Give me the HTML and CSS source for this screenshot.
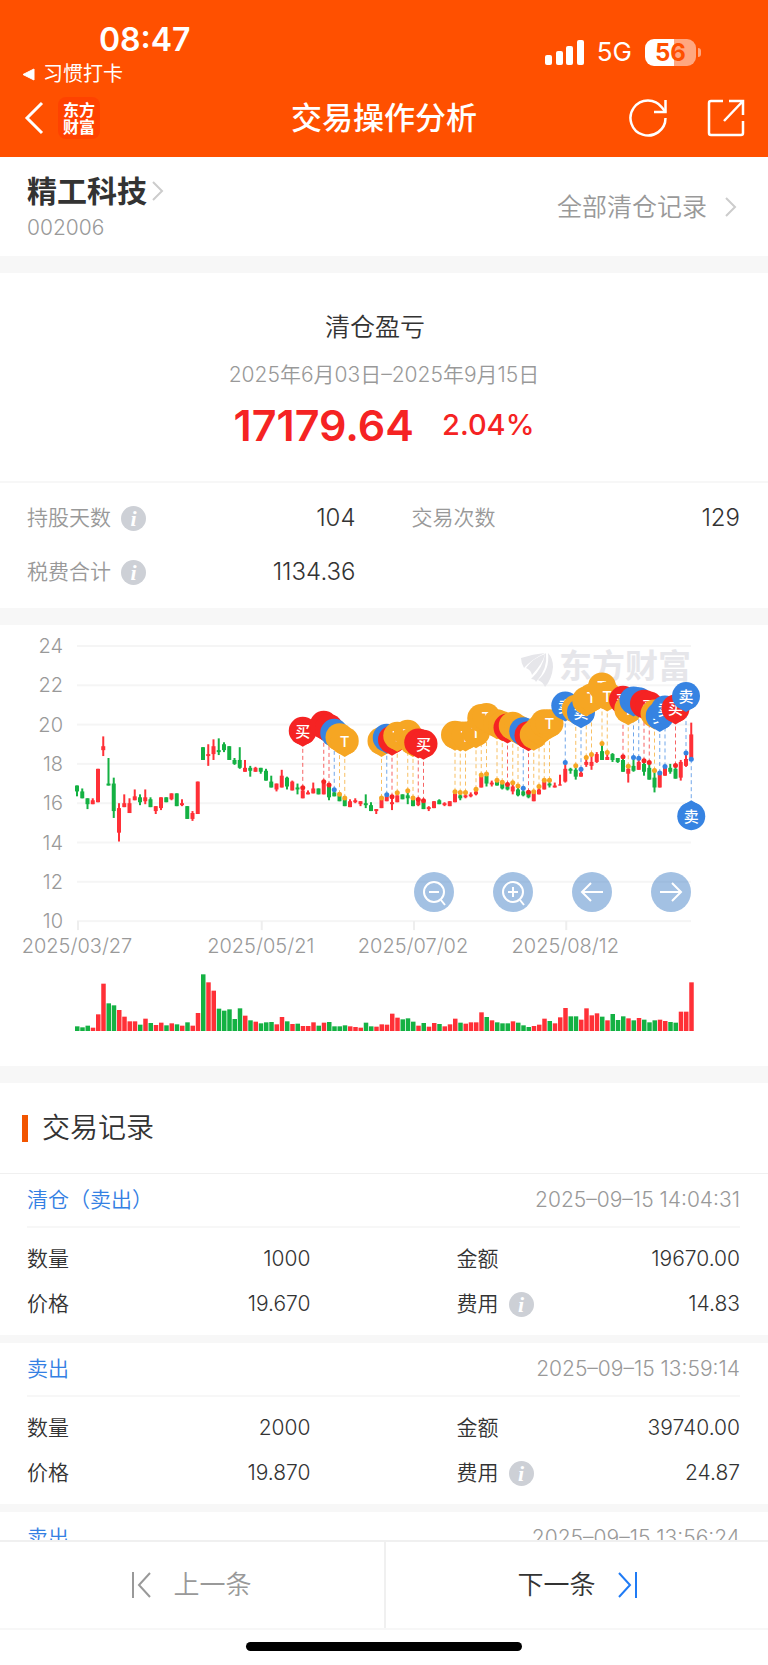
FILE: index.html
```
<!DOCTYPE html>
<html lang="zh-CN">
<head>
    <meta charset="UTF-8">
    <meta name="viewport" content="width=device-width, initial-scale=1.0">
    <title>交易操作分析</title>
    <link rel="stylesheet" href="styles.css">
</head>
<body>
    <header class="top">
        <div class="status-bar">
            <div class="status-left">
                <div class="clock">08:47</div>
                <a class="back-app" href="#">
                    <svg width="13" height="19" viewBox="0 0 13 19"><path d="M12 4v11L1 9.500z" fill="#fff" stroke="#fff" stroke-linejoin="round"/></svg>
                    习惯打卡
                </a>
            </div>
            <div class="status-right">
                <svg width="39" height="25" viewBox="0 0 39 25" fill="#fff">
                    <rect x="0" y="15" width="7" height="10" rx="2"/>
                    <rect x="11" y="11" width="7" height="14" rx="2"/>
                    <rect x="21" y="6" width="7" height="19" rx="2"/>
                    <rect x="32" y="0" width="7" height="25" rx="2"/>
                </svg>
                <span class="network">5G</span>
                <span class="battery">56</span>
            </div>
        </div>
        <nav class="nav-bar">
            <div class="nav-side">
                <button class="icon-btn" aria-label="返回">
                    <svg width="22" height="34" viewBox="0 0 22 34" fill="none" stroke="#fff" stroke-width="3"><path d="M19 2 4 17l15 15"/></svg>
                </button>
                <span class="app-logo">东方<br>财富</span>
            </div>
            <h1>交易操作分析</h1>
            <div class="nav-side nav-actions">
                <button class="icon-btn" aria-label="刷新">
                    <svg width="38" height="38" viewBox="0 0 38 38" fill="none" stroke="#fff" stroke-width="2.500"><path d="M36.500 19A17.500 17.500 0 1 1 33 8.500L36.500 13"/><path d="M36.500 1v12H25"/></svg>
                </button>
                <button class="icon-btn" aria-label="分享">
                    <svg width="38" height="38" viewBox="0 0 38 38" fill="none" stroke="#fff" stroke-width="2.500"><path d="M16 2H4q-2 0-2 2v30q0 2 2 2h30q2 0 2-2V22"/><path d="M22 2h14v14M36 2 17 22"/></svg>
                </button>
            </div>
        </nav>
    </header>

    <main>
        <section class="stock">
            <a class="stock-name" href="#">
                <h2>精工科技</h2>
                <svg class="chevron" width="12" height="20" viewBox="0 0 12 20"><path d="m1 1 9 9-9 9"/></svg>
                <span class="code">002006</span>
            </a>
            <a class="all-records" href="#">
                全部清仓记录
                <svg class="chevron" width="12" height="20" viewBox="0 0 12 20"><path d="m1 1 9 9-9 9"/></svg>
            </a>
        </section>

        <section class="summary">
            <h3>清仓盈亏</h3>
            <p class="period">2025年6月03日–2025年9月15日</p>
            <p class="profit"><strong>17179.64</strong><span>2.04%</span></p>
        </section>

        <dl class="stats">
            <div><dt>持股天数 <i class="info">i</i></dt><dd>104</dd></div>
            <div><dt>交易次数</dt><dd>129</dd></div>
            <div><dt>税费合计 <i class="info">i</i></dt><dd>1134.36</dd></div>
        </dl>

        <section class="chart">
            <svg id="chart" viewBox="0 0 768 441"></svg>
            <div class="chart-tools">
                <button aria-label="缩小"><svg viewBox="0 0 40 40"><circle cx="20" cy="20" r="10"/><path d="M15 20h10M27 28l4 5"/></svg></button>
                <button aria-label="放大"><svg viewBox="0 0 40 40"><circle cx="20" cy="20" r="10"/><path d="M15 20h10M20 15v10M27 28l4 5"/></svg></button>
                <button aria-label="左移"><svg viewBox="0 0 40 40"><path d="M31 20H10M19 11l-9 9 9 9"/></svg></button>
                <button aria-label="右移"><svg viewBox="0 0 40 40"><path d="M9 20h21M21 11l9 9-9 9"/></svg></button>
            </div>
        </section>

        <section class="records">
            <h3 class="records-title">交易记录</h3>
            <article class="record">
                <header><a href="#">清仓（卖出）</a><time>2025–09–15 14:04:31</time></header>
                <dl>
                    <div><dt>数量</dt><dd>1000</dd></div>
                    <div><dt>金额</dt><dd>19670.00</dd></div>
                    <div><dt>价格</dt><dd>19.670</dd></div>
                    <div><dt>费用 <i class="info">i</i></dt><dd>14.83</dd></div>
                </dl>
            </article>
            <article class="record">
                <header><a href="#">卖出</a><time>2025–09–15 13:59:14</time></header>
                <dl>
                    <div><dt>数量</dt><dd>2000</dd></div>
                    <div><dt>金额</dt><dd>39740.00</dd></div>
                    <div><dt>价格</dt><dd>19.870</dd></div>
                    <div><dt>费用 <i class="info">i</i></dt><dd>24.87</dd></div>
                </dl>
            </article>
            <article class="record">
                <header><a href="#">卖出</a><time>2025–09–15 13:56:24</time></header>
            </article>
        </section>
    </main>

    <footer>
        <div class="pager">
            <button class="prev">
                <svg width="19" height="26" viewBox="0 0 19 26"><path d="M1 0v26M18 1 7 13l11 12"/></svg>
                上一条
            </button>
            <button class="next">
                下一条
                <svg width="19" height="26" viewBox="0 0 19 26"><path d="M18 0v26M1 1l11 12L1 25"/></svg>
            </button>
        </div>
        <div class="home-indicator"></div>
    </footer>

    <script src="chart.js"></script>
</body>
</html>
```
FILE: styles.css
```
* {
    margin: 0;
    padding: 0;
    box-sizing: border-box;
}

body {
    height: 100vh;
    display: flex;
    flex-direction: column;
    font-family: Inter, "Noto Sans CJK SC", sans-serif;
    font-size: 21px;
    font-weight: 350;
    line-height: 30px;
    color: #333;
    background: #fff;
}

a {
    color: inherit;
    text-decoration: none;
}

button {
    font: inherit;
    color: inherit;
    background: none;
    border: none;
    cursor: pointer;
}

svg {
    display: block;
}

/* top */
.top {
    flex: none;
    height: 157px;
    background: #ff5000;
    color: #fff;
    font-weight: 400;
}

.status-bar {
    display: flex;
    justify-content: space-between;
    height: 90px;
    padding: 20px 72px 0 22px;
}

.clock {
    padding-left: 77px;
    font-size: 32px;
    font-weight: 600;
    line-height: 39px;
}

.back-app {
    display: flex;
    align-items: center;
    gap: 8px;
    font-size: 20px;
}

.status-right {
    display: flex;
    align-items: center;
    gap: 13px;
    height: 64px;
}

.network {
    font-size: 26px;
}

.battery {
    position: relative;
    width: 51px;
    height: 27px;
    border-radius: 9px;
    background: linear-gradient(90deg, #fff 56%, #ffa780 56%);
    color: #ff5000;
    font-size: 24px;
    font-weight: 700;
    line-height: 27px;
    text-align: center;
}

.battery::after {
    content: "";
    position: absolute;
    right: -5px;
    top: 9px;
    width: 3px;
    height: 9px;
    border-radius: 0 3px 3px 0;
    background: #ffa780;
}

.nav-bar {
    display: grid;
    grid-template-columns: 1fr auto 1fr;
    align-items: center;
    height: 56px;
    padding: 0 23px;
}

.nav-bar h1 {
    font-size: 31px;
    font-weight: 500;
    line-height: 40px;
}

.nav-side {
    display: flex;
    align-items: center;
    gap: 13px;
}

.nav-actions {
    justify-content: flex-end;
    gap: 40px;
}

.app-logo {
    width: 42px;
    height: 42px;
    padding: 4px 0;
    border-radius: 8px;
    background: #ff4200;
    font-family: "Noto Sans CJK SC", sans-serif;
    font-size: 16px;
    font-weight: 700;
    line-height: 17px;
    text-align: center;
}

/* content */
main {
    flex: 1;
    min-height: 0;
    overflow: hidden;
}

.stock,
.stats,
.chart {
    border-bottom: 17px solid #f7f7f7;
}

.stock {
    display: flex;
    justify-content: space-between;
    align-items: center;
    height: 116px;
    padding: 0 31px 0 27px;
}

.stock-name {
    display: grid;
    grid-template-columns: auto 1fr;
    gap: 2px 5px;
    align-items: center;
}

.stock-name h2 {
    font-size: 30px;
    font-weight: 600;
    line-height: 40px;
}

.chevron {
    fill: none;
    stroke: #ccc;
    stroke-width: 2;
}

.code {
    color: #999;
}

.all-records {
    display: flex;
    align-items: center;
    gap: 18px;
    font-size: 25px;
    color: #999;
}

.summary {
    display: flex;
    flex-direction: column;
    align-items: center;
    height: 210px;
    padding-top: 39px;
    border-bottom: 2px solid #f7f7f7;
}

.summary h3 {
    padding-right: 18px;
    font-size: 25px;
    font-weight: 350;
}

.period {
    margin-top: 18px;
    color: #999;
}

.profit {
    display: flex;
    align-items: center;
    gap: 28px;
    margin-top: 10px;
    line-height: 50px;
    color: #f52323;
}

.profit strong {
    font-size: 43px;
    font-weight: 600;
}

.profit span {
    font-size: 29px;
    font-weight: 500;
}

.stats {
    display: grid;
    grid-template-columns: 1fr 1fr;
    gap: 24px 56px;
    padding: 20px 28px 21px 27px;
}

.stats > div,
.record dl > div {
    display: flex;
    justify-content: space-between;
    align-items: center;
}

dt {
    display: flex;
    align-items: center;
    gap: 10px;
}

.stats dt {
    color: #999;
}

.stats dd {
    font-size: 24px;
}

.info {
    width: 25px;
    height: 25px;
    border-radius: 50%;
    background: #cdd0d6;
    color: #fff;
    font-family: "Liberation Serif", serif;
    font-size: 22px;
    font-weight: 700;
    line-height: 25px;
    text-align: center;
}

.chart {
    position: relative;
}

.chart > svg {
    width: 100%;
}

.chart text {
    font-size: 20px;
    fill: #999;
}

.chart .watermark {
    font-size: 33px;
    font-weight: 700;
    fill: #e6e6ea;
}

.chart .pin-label {
    font-size: 15px;
    font-weight: 500;
    fill: #fff;
}

.chart-tools {
    position: absolute;
    top: 56%;
    right: 10%;
    display: flex;
    gap: 39px;
}

.chart-tools button {
    width: 40px;
    height: 40px;
    border-radius: 50%;
    background: rgba(72, 131, 200, 0.5);
}

.chart-tools svg {
    fill: none;
    stroke: #fff;
    stroke-width: 2;
}

.records-title {
    display: flex;
    align-items: center;
    gap: 14px;
    height: 90px;
    padding-left: 22px;
    font-size: 28px;
    font-weight: 350;
}

.records-title::before {
    content: "";
    width: 6px;
    height: 27px;
    background: #f25500;
}

.record {
    border-top: 1px solid #f0f0f0;
    border-bottom: 8px solid #f7f7f7;
    padding: 0 28px 0 27px;
}

.record + .record {
    border-top: none;
}

.record header {
    display: flex;
    justify-content: space-between;
    align-items: center;
    height: 54px;
    border-bottom: 2px solid #f7f7f7;
}

.record header a {
    color: #3480e3;
}

.record time {
    color: #999;
}

.record dl {
    display: grid;
    grid-template-columns: 1fr 1fr;
    gap: 15px 146px;
    padding: 16px 0;
}

/* footer */
footer {
    flex: none;
    border-top: 2px solid #f0f0f0;
    background: #fff;
}

.pager {
    display: grid;
    grid-template-columns: 1fr 1fr;
    height: 88px;
    border-bottom: 2px solid #f7f7f7;
}

.pager button {
    display: flex;
    justify-content: center;
    align-items: center;
    gap: 22px;
    font-size: 26px;
}

.pager svg {
    fill: none;
    stroke: currentColor;
    stroke-width: 2;
}

.pager .prev {
    color: #999;
}

.pager .next {
    border-left: 2px solid #f0f0f0;
}

.next svg {
    color: #1f7bf5;
}

.home-indicator {
    width: 36%;
    height: 9px;
    margin: 12px auto 14px;
    border-radius: 5px;
    background: #000;
}
```
FILE: chart.js
```
const RED = '#ff3037';
const GREEN = '#14b143';
const PIN_COLORS = { B: '#f52323', S: '#3683e2', T: '#f6a623' };
const PIN_TEXT = { B: '买', S: '卖', T: 'T' };

// [direction, volume, high, body top, body bottom, low]
const days = [
    ['d', 14, 16.9, 16.9, 16.6, 16.35], ['d', 11, 16.75, 16.6, 16.25, 16.25], ['d', 16, 16.25, 16.25, 15.95, 15.7],
    ['u', 10, 16.25, 16.15, 15.95, 15.95], ['u', 50, 17.75, 17.75, 16.05, 16.05], ['u', 142, 19.4, 18.9, 18.7, 18.4],
    ['d', 83, 18.3, 17, 16.9, 16.9], ['d', 77, 17.3, 17, 15.6, 15.25], ['u', 63, 16, 15.75, 14.5, 14.05],
    ['u', 43, 16.45, 16, 15.8, 15.8], ['u', 29, 16.25, 16, 15.5, 15.5], ['u', 29, 16.7, 16.35, 16.15, 16.15],
    ['d', 19, 16.45, 16.3, 16.05, 15.9], ['u', 37, 16.7, 16.3, 16.1, 15.95], ['d', 24, 16.3, 16.2, 15.8, 15.8],
    ['u', 18, 15.85, 15.85, 15.6, 15.45], ['u', 25, 16.3, 16.3, 15.75, 15.65], ['d', 17, 16.3, 16.3, 16.05, 16.05],
    ['u', 23, 16.5, 16.5, 16.2, 16.15], ['d', 20, 16.5, 16.5, 15.85, 15.85], ['u', 16, 16.2, 16, 15.9, 15.85],
    ['d', 26, 15.85, 15.85, 15.2, 15.2], ['u', 16, 15.6, 15.5, 15.2, 15.1], ['u', 54, 17.1, 17.1, 15.45, 15.45],
    ['d', 170, 18.85, 18.85, 18.2, 18.2], ['u', 146, 19, 18.5, 18.4, 17.9], ['u', 121, 19.25, 18.9, 18.5, 18.2],
    ['d', 67, 19.3, 18.7, 18.6, 18.45], ['d', 61, 19.1, 19, 18.7, 18.6], ['d', 65, 18.9, 18.9, 18.2, 18.2],
    ['d', 36, 18.3, 18.2, 18, 17.95], ['d', 68, 18.85, 18.2, 17.8, 17.75], ['u', 46, 18.2, 17.8, 17.6, 17.6],
    ['d', 32, 17.9, 17.8, 17.65, 17.35], ['u', 28, 17.85, 17.8, 17.6, 17.6], ['d', 23, 17.8, 17.8, 17.6, 17.5],
    ['d', 26, 17.75, 17.65, 17.15, 17.15], ['d', 27, 17.4, 17.1, 16.8, 16.8], ['u', 20, 17, 17, 16.7, 16.6],
    ['u', 42, 17.7, 17.4, 16.8, 16.8], ['d', 29, 17.35, 17.3, 16.85, 16.7], ['u', 21, 17.15, 17.1, 16.65, 16.65],
    ['d', 22, 17, 16.8, 16.7, 16.45], ['u', 15, 16.7, 16.65, 16.25, 16.25], ['u', 15, 16.65, 16.55, 16.45, 16.45],
    ['u', 26, 17.05, 16.75, 16.5, 16.5], ['d', 16, 16.75, 16.75, 16.45, 16.45], ['u', 25, 17.05, 17, 16.45, 16.45],
    ['d', 27, 16.85, 16.85, 16.3, 16.15], ['d', 14, 16.6, 16.55, 16.35, 16.35], ['d', 14, 16.4, 16.4, 16.1, 16.1],
    ['d', 17, 16.25, 16.25, 15.85, 15.85], ['u', 14, 16.2, 16.1, 15.8, 15.8], ['u', 12, 16.25, 16.15, 16.05, 16],
    ['u', 10, 16.1, 16.1, 15.95, 15.85], ['d', 25, 16.45, 16, 15.9, 15.75], ['d', 14, 16.05, 15.9, 15.6, 15.6],
    ['u', 13, 15.7, 15.7, 15.6, 15.45], ['u', 20, 16.2, 16.2, 15.75, 15.75], ['u', 19, 16.35, 16.35, 16.1, 16.1],
    ['u', 52, 16.35, 16.05, 15.95, 15.65], ['u', 40, 16.4, 16.4, 16.05, 16.05], ['d', 35, 16.45, 16.45, 16.2, 16.2],
    ['d', 38, 16.6, 16.4, 16.25, 15.95], ['d', 28, 16.25, 16.25, 15.85, 15.85], ['u', 16, 16.1, 16.1, 15.9, 15.85],
    ['d', 24, 16.05, 16.05, 15.7, 15.7], ['u', 13, 15.85, 15.8, 15.7, 15.6], ['u', 24, 16.1, 16.1, 15.75, 15.75],
    ['d', 21, 16.2, 16.15, 15.95, 15.95], ['u', 14, 16.05, 16, 15.9, 15.85], ['u', 20, 16.1, 16.1, 15.85, 15.85],
    ['u', 37, 16.5, 16.5, 16.05, 16.05], ['d', 25, 16.5, 16.4, 16.25, 16.15], ['u', 22, 16.5, 16.4, 16.3, 16.25],
    ['u', 26, 16.55, 16.45, 16.35, 16.3], ['u', 26, 16.7, 16.6, 16.45, 16.4], ['u', 56, 17.4, 17.4, 16.8, 16.8],
    ['d', 42, 17.5, 17.4, 17, 16.85], ['u', 32, 17.15, 17.05, 16.95, 16.85], ['d', 26, 17.1, 17.1, 16.9, 16.9],
    ['d', 23, 17, 17, 16.75, 16.7], ['d', 23, 16.95, 16.85, 16.7, 16.65], ['u', 29, 17, 16.85, 16.6, 16.45],
    ['d', 25, 16.85, 16.7, 16.4, 16.35], ['d', 17, 16.75, 16.6, 16.4, 16.35], ['d', 12, 16.55, 16.5, 16.3, 16.25],
    ['u', 15, 16.6, 16.6, 16.1, 16.1], ['u', 19, 16.8, 16.7, 16.45, 16.45], ['u', 37, 17.15, 17.1, 16.7, 16.7],
    ['d', 30, 17.15, 17, 16.9, 16.8], ['u', 23, 17.05, 16.9, 16.8, 16.8], ['u', 41, 17.45, 16.95, 16.9, 16.9],
    ['u', 69, 18, 17.75, 17.1, 17.05], ['d', 44, 17.8, 17.75, 17.65, 17.5], ['d', 44, 17.8, 17.7, 17.35, 17.2],
    ['u', 34, 17.7, 17.55, 17.35, 17.35], ['u', 68, 18.3, 18.1, 17.95, 17.85], ['u', 47, 18.45, 18.1, 17.9, 17.7],
    ['u', 53, 18.6, 18.5, 18.1, 18.05], ['d', 43, 19, 18.65, 18.2, 18.2], ['u', 32, 18.6, 18.35, 18.2, 18.2],
    ['d', 51, 18.55, 18.5, 18.2, 18.1], ['d', 33, 18.3, 18.3, 18.1, 18.05], ['d', 44, 18.3, 18.2, 17.6, 17.6],
    ['u', 38, 17.85, 17.75, 17.5, 17.05], ['d', 32, 18.35, 17.9, 17.65, 17.6], ['u', 39, 18.2, 18.1, 17.7, 17.7],
    ['d', 34, 18.1, 18, 17.6, 17.4], ['d', 26, 18, 17.8, 17.2, 17.2], ['d', 32, 17.65, 17.3, 16.8, 16.55],
    ['u', 34, 17.5, 17.5, 16.8, 16.8], ['u', 30, 17.85, 17.8, 17.4, 17.4], ['d', 27, 18, 17.8, 17.6, 17.5],
    ['d', 25, 17.9, 17.75, 17.25, 17.25], ['u', 58, 18.2, 18.1, 17.3, 17.15], ['u', 58, 18.55, 18.25, 17.9, 17.85],
    ['u', 146, 20.1, 19.5, 18.25, 18.25]
];

// [day index, trade type, price, pin below the price]
const trades = [
    [43, 'B', 16.78], [47, 'B', 17.09], [48, 'B', 16.93], [49, 'S', 16.68], [50, 'T', 16.46], [51, 'T', 16.27],
    [58, 'T', 16.27], [59, 'S', 16.43], [60, 'B', 16.33], [61, 'T', 16.53], [63, 'T', 16.63], [64, 'T', 16.27],
    [65, 'B', 16.19], [66, 'B', 16.12], [72, 'T', 16.58], [73, 'T', 16.54], [74, 'T', 16.54], [76, 'T', 16.71],
    [77, 'T', 17.43], [78, 'T', 17.48], [80, 'T', 17.17], [81, 'T', 17.07], [82, 'B', 16.95], [83, 'T', 17.04],
    [84, 'T', 16.88], [85, 'S', 16.76], [86, 'B', 16.56], [87, 'T', 16.58], [88, 'T', 16.85], [89, 'T', 17.17],
    [90, 'T', 17.17], [93, 'S', 18.07], [95, 'T', 17.9], [96, 'S', 17.73], [97, 'T', 18.33], [98, 'T', 18.48],
    [100, 'T', 19.04], [101, 'T', 18.58], [104, 'B', 18.36], [105, 'T', 17.88], [106, 'S', 18.33], [107, 'S', 18.29],
    [108, 'B', 18.16], [109, 'B', 18.07], [110, 'T', 17.66], [111, 'S', 17.54], [112, 'S', 17.87], [114, 'B', 17.92],
    [116, 'S', 18.55], [117, 'S', 18.24, true]
];

const ticks = [[0, '2025/03/27'], [35, '2025/05/21'], [64, '2025/07/02'], [93, '2025/08/12']];

const x = i => 77 + i * 5.25;
const y = price => 21 + (24 - price) * 19.65;
const rect = (left, top, w, h, color) => `<rect x="${left}" y="${top}" width="${w}" height="${h}" fill="${color}"/>`;

function drawAxes() {
    let out = '';
    for (let price = 24; price >= 10; price -= 2) {
        out += rect(77, y(price) - 1, 614, 2, '#f5f5f5');
        out += `<text x="63" y="${y(price) + 7}" text-anchor="end">${price}</text>`;
    }
    ticks.forEach(([i, label]) => {
        out += rect(x(i), y(10), 2, 9, '#eee');
        out += `<text x="${x(i)}" y="328" text-anchor="middle">${label}</text>`;
    });
    return out;
}

function drawWatermark() {
    return `<g fill="#e6e6ea">
        <path d="M521 33Q533 29 545 28Q532 34 524 43Q521 38 521 33Z"/>
        <path d="M526 43Q533 33 545 29Q543 38 532 50Q531 45 526 43Z"/>
        <path d="M531 54Q543 43 545 29L546 28Q548 44 536 57Q535 54 531 54Z"/>
        <path d="M538 55Q550 45 548 28Q553 33 553 42Q552 54 545 62Q543 57 538 55Z"/>
    </g>
    <text class="watermark" x="559" y="53">东方财富</text>`;
}

function drawDays() {
    return days.map(([dir, volume, high, top, bottom, low], i) => {
        const color = dir === 'u' ? RED : GREEN;
        return rect(x(i) - 1, y(high), 2, y(low) - y(high), color)
            + rect(x(i) - 2, y(top), 4, y(bottom) - y(top), color)
            + rect(x(i) - 2, 406 - volume / 3, 4.5, volume / 3, color);
    }).join('');
}

// a pin whose right neighbour sits almost on top of it shows no label
function isCovered(n) {
    const next = trades[n + 1];
    if (!next || next[3]) return false;
    const [i, , price] = trades[n];
    return Math.hypot(x(next[0]) - x(i), y(next[2]) - y(price)) < 8;
}

function drawPins() {
    let lines = '';
    let pins = '';
    trades.forEach(([i, type, price, below], n) => {
        const color = PIN_COLORS[type];
        const dir = below ? 1 : -1;
        const tip = y(price) + dir * 41;
        const label = isCovered(n) ? '' : `<text class="pin-label" y="6" text-anchor="middle">${PIN_TEXT[type]}</text>`;
        lines += `<path d="M${x(i)} ${y(price)}V${tip}" stroke="${color}" stroke-dasharray="4 3" opacity="0.7"/>`;
        lines += `<circle cx="${x(i)}" cy="${y(price)}" r="2.500" fill="${color}"/>`;
        pins += `<g transform="translate(${x(i)} ${tip + dir * 16})">
            <g fill="${color}"><circle r="14"/><path d="M-10 ${-dir * 10}L0 ${-dir * 16}L10 ${-dir * 10}Z"/></g>
            ${label}
        </g>`;
    });
    return lines + pins;
}

document.getElementById('chart').innerHTML = drawAxes() + drawWatermark() + drawDays() + drawPins();
```
